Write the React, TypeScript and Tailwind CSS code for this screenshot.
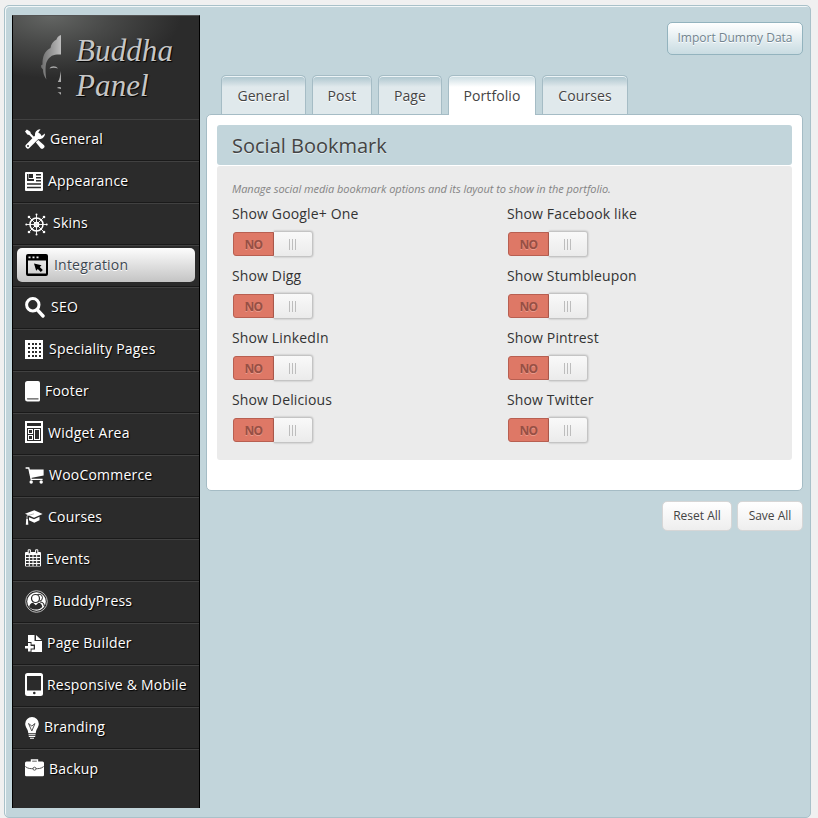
import React from "react";

type Item = {
  label: string;
  w: number;
  h: number;
  top: number;
  textX: number;
  icon: React.ReactNode;
};

const W = "#fff";
const D = "#2b2b2b";

const items: Item[] = [
  {
    label: "General", w: 20, h: 20, top: 10, textX: 50,
    icon: (
      <>
        <path d="M2.9 17.1 13.5 6.5" stroke={W} strokeWidth="4.8" strokeLinecap="round" />
        <path d="M15.5.2a5.3 5.3 0 0 0-5.3 6.8l2.8 2.9a5.4 5.4 0 0 0 7-5.4l-3.1 2.2-2.6-.7-.9-2.7z" fill={W} />
        <circle cx="3" cy="17" r="1" fill={D} />
        <path d="M0 2.4 1.9.5 5.3 2.7l.5 1.9 3.600 3.600-1.500 1.500-3.600-3.600-2-.6z" fill={W} />
        <path d="m10.800 13.200 2.400-2.300 5.600 5a2.300 2.300 0 0 1-3.200 3.300z" fill={W} />
      </>
    ),
  },
  {
    label: "Appearance", w: 18, h: 19, top: 11, textX: 48,
    icon: (
      <>
        <rect width="18" height="19" rx="1" fill={W} />
        <path d="M2 2h7v7H2zM11 2h5v1.5h-5zM11 5h5v1.5h-5zM11 8h5v1.5h-5zM2 11.3h14v1.4H2zM2 14.8h14v1.4H2z" fill={D} />
        <path d="M3.500 2h5.500v5H3.500z" fill={W} />
        <path d="M4 2h4v4H4z" fill={D} />
      </>
    ),
  },
  {
    label: "Skins", w: 23, h: 23, top: 10, textX: 53,
    icon: (
      <g stroke={W} fill="none">
        <circle cx="11.5" cy="11.5" r="6.5" strokeWidth="1.5" />
        <circle cx="11.5" cy="11.5" r="2.3" strokeWidth="1.1" />
        <path d="M11.5 1v21M1 11.5h21M4.2 4.2l14.6 14.6M18.8 4.2 4.2 18.8" strokeWidth=".9" />
        <g fill={W} stroke="none">
          <circle cx="11.5" cy="1.5" r="1" /><circle cx="11.5" cy="21.5" r="1" />
          <circle cx="1.3" cy="11.5" r="1" /><circle cx="21.7" cy="11.5" r="1" />
          <circle cx="4" cy="4" r="1.3" /><circle cx="19" cy="4" r="1.3" />
          <circle cx="4" cy="19" r="1.3" /><circle cx="19" cy="19" r="1.3" />
        </g>
      </g>
    ),
  },
  {
    label: "Integration", w: 24, h: 22, top: 9, textX: 54,
    icon: (
      <>
        <path fillRule="evenodd" d="M3 0h18a2 2 0 0 1 2 2v18a2 2 0 0 1-2 2H3a2 2 0 0 1-2-2V2a2 2 0 0 1 2-2zM3 6.500v13h18v-13z" fill="#000" />
        <path d="M3.500 2.600h2v1.700h-2zM7.500 2.600h2v1.700h-2zM11.500 2.600h2v1.700h-2z" fill="#eee" />
        <path d="m9 9.500 7.500 1.800-1.700 1.700 3 3-2 2-3-3-1.600 1.700z" fill="#000" />
      </>
    ),
  },
  {
    label: "SEO", w: 20, h: 21, top: 10, textX: 51,
    icon: (
      <>
        <circle cx="7.8" cy="7.8" r="6.2" fill="none" stroke={W} strokeWidth="3" />
        <path d="m12.4 12.8 5.600 6.200" stroke={W} strokeWidth="3.4" strokeLinecap="round" />
      </>
    ),
  },
  {
    label: "Speciality Pages", w: 18, h: 19, top: 11, textX: 49,
    icon: (
      <>
        <path d="M0 0h18v19H0z" fill={W} />
        {[3, 7, 11, 15].map((y) => (
          <path key={y} d={`M3 ${y}h2v2H3zM7 ${y}h2v2H7zM10 ${y}h2v2h-2zM14 ${y}h2v2h-2z`} fill={D} />
        ))}
      </>
    ),
  },
  {
    label: "Footer", w: 15, h: 21, top: 10, textX: 45,
    icon: (
      <>
        <path d="M2.5 0H13a2 2 0 0 1 2 2v17a1.5 1.5 0 0 1-1.5 1.5H2.4A2.4 2.4 0 0 1 0 18.2V2.5A2.5 2.5 0 0 1 2.5 0z" fill={W} />
        <path d="M2 17.2h11.5v1.3H2.2z" fill="#555" />
      </>
    ),
  },
  {
    label: "Widget Area", w: 18, h: 22, top: 8, textX: 48,
    icon: (
      <>
        <path d="M0 0h18v22H0z" fill={W} />
        <path d="M2 2h14v3H2zM2 7h14v13H2z" fill={D} />
        <path d="M3 8h5v5H3zM3 14h5v5H3zM9 8h6v11H9z" fill={W} />
        <path d="M4 9h3v3H4zM4 15h3v3H4zM10 9h4v9h-4z" fill={D} />
      </>
    ),
  },
  {
    label: "WooCommerce", w: 19, h: 17, top: 12, textX: 49,
    icon: (
      <>
        <path d="M.6 1h3.2l2.4 11.3h11.4" fill="none" stroke={W} strokeWidth="1.3" />
        <path d="M4 2.600h14.600v6L5.800 11z" fill={W} />
        <circle cx="6.2" cy="15" r="1.7" fill={W} />
        <circle cx="16.2" cy="15" r="1.7" fill={W} />
      </>
    ),
  },
  {
    label: "Courses", w: 18, h: 15, top: 13, textX: 48,
    icon: (
      <>
        <path d="m0 3.8 9.3-3.6L17.6 4 9 7.8z" fill={W} />
        <path d="M4 7.200 9 9.200l5.500-2.400v3.400L9.300 12.800 4 10.200z" fill={W} />
        <path d="M9 3.8 2 5.8v8" fill="none" stroke="#bbb" strokeWidth="1" />
        <path d="M1.3 9h1.6l.4 5.7H.8z" fill={W} />
      </>
    ),
  },
  {
    label: "Events", w: 16, h: 18, top: 10, textX: 46,
    icon: (
      <>
        <path d="M1 3h14a1 1 0 0 1 1 1v12.500a1 1 0 0 1-1 1H1a1 1 0 0 1-1-1V4a1 1 0 0 1 1-1z" fill={W} />
        <path d="M3.200.8h2.200v4H3.200zM10.600.8h2.200v4h-2.200z" fill={D} stroke={W} strokeWidth="1" />
        {[6, 9, 12, 15].map((y) => (
          <path key={y} d={`M1 ${y}h2.800v2H1zM4.800 ${y}h2.700v2H4.800zM8.500 ${y}h2.700v2H8.500zM12.200 ${y}H15v2h-2.800z`} fill="#3a3a3a" />
        ))}
      </>
    ),
  },
  {
    label: "BuddyPress", w: 23, h: 23, top: 9, textX: 53,
    icon: (
      <>
        <circle cx="11.5" cy="11.5" r="10.8" fill="none" stroke="#bbb" strokeWidth="1" />
        <circle cx="11.5" cy="11.5" r="9.300" fill={W} />
        <circle cx="14" cy="7.700" r="3.500" fill={W} stroke={D} strokeWidth="1" />
        <path d="M15 12c2.500 0 4 1.500 4.300 4" fill="none" stroke={D} strokeWidth="1.200" />
        <circle cx="10.500" cy="8.500" r="4" fill={W} stroke={D} strokeWidth="1.200" />
        <path d="M4.200 17c.2-2.700 2-4 3.900-4.200l2.700 2.400 2.700-2.400c2 .2 3.600 1.500 3.800 4.200-3 3.300-9.500 3.600-13.100 0z" fill={D} />
      </>
    ),
  },
  {
    label: "Page Builder", w: 17, h: 17, top: 12, textX: 47,
    icon: (
      <>
        <path d="M3 0h6.500v6H17v11H6.500v-2.500H10v-5H6.500V7H3z" fill={W} />
        <path d="M11 0v5h5.500z" fill={W} />
        <path d="M4.300 8v8.500M0 12.300h8.700" stroke={W} strokeWidth="2.600" />
      </>
    ),
  },
  {
    label: "Responsive & Mobile", w: 18, h: 24, top: 8, textX: 47,
    icon: (
      <>
        <rect width="18" height="23" rx="2.5" fill={W} />
        <path d="M2 3h14v14.500H2z" fill={D} />
        <circle cx="9.300" cy="20" r="1.300" fill={D} />
      </>
    ),
  },
  {
    label: "Branding", w: 14, h: 22, top: 10, textX: 44,
    icon: (
      <>
        <path d="M7 0a6.800 6.800 0 0 1 6.800 6.800c0 3.600-2.700 5-3 9.400H3.300C3 11.800.2 10.400.2 6.800A6.800 6.800 0 0 1 7 0z" fill={W} />
        <path d="m3.500 6.500 3.300 7.500L10 6.500 6.800 9z" fill="none" stroke="#555" strokeWidth="1" />
        <path d="M3.500 17.700h7M3.800 19.500h6.400M5 21.300h4" stroke={W} strokeWidth="1.100" />
      </>
    ),
  },
  {
    label: "Backup", w: 19, h: 18, top: 10, textX: 49,
    icon: (
      <>
        <path d="M6.500 3V1h6v2" fill="none" stroke={W} strokeWidth="1.400" />
        <path d="M1.500 2.500h16A1.500 1.500 0 0 1 19 4v12a1.300 1.300 0 0 1-1.300 1.300H1.300A1.300 1.300 0 0 1 0 16V4a1.500 1.500 0 0 1 1.500-1.500z" fill={W} />
        <path d="M.3 7.500c2.500 2.200 5 2.200 9.200 2.200s6.700 0 9.200-2.200" fill="none" stroke="#555" strokeWidth="1" />
        <circle cx="9.500" cy="9.700" r="1.500" fill={W} stroke="#555" strokeWidth="1" />
      </>
    ),
  },
];

function Logo() {
  return (
    <div className="flex h-[103px] shrink-0 bg-[radial-gradient(ellipse_130px_62px_at_38px_0px,#636563_0%,#484948_45%,#2b2b2b_100%)]">
      <svg className="ml-7 mt-[19px] shrink-0" width="20" height="61" viewBox="0 0 20 61">
        <defs>
          <linearGradient id="face" x1="0" x2="1" y1="0" y2="0">
            <stop offset="0" stopColor="#6d6d6d" />
            <stop offset="1" stopColor="#bdbdbd" />
          </linearGradient>
        </defs>
        <path d="M20 0v19.500h-4c-5 0-9 3.500-10.800 8.500-1 4-.8 11 .2 16.500C2.800 41 2 37 2 34.500L.3 32.500 0 30.500l1.500-1C1.300 22 3.500 16 9.500 13c.5-4 2.500-6.500 6-8.500C16 2.500 17.500.8 20 0z" fill="url(#face)" />
        <path d="M8.500 33.500c1.500-2.800 6.500-3 8.500 0-3-1-5.500-1-8.500 0zM20 36v11h-3.200c2-2.500 2.200-6.500 3.200-11zM16 53c1-1.200 2.500-1 4-.5V54zM16.500 57.200H20V60c-1-1.500-2-2-3.500-2.800z" fill="#aaa" />
      </svg>
      <div className="ml-[15px] mt-[17px] font-['Liberation_Serif'] text-[31px] italic leading-[35px] tracking-[0.1px] text-[#c6c6c6] [text-shadow:1px_1px_1px_#000]">
        <div>Buddha</div>
        <div>Panel</div>
      </div>
    </div>
  );
}

function Sidebar() {
  return (
    <nav className="ml-[7px] mt-[8px] flex h-[793px] w-[188px] shrink-0 flex-col border-x border-t border-black border-t-[#555] bg-[#2b2b2b]">
      <Logo />
      {items.map((it, i) => {
        const active = it.label === "Integration";
        return (
          <div
            key={it.label}
            className={
              "h-[42px] shrink-0 border-t border-t-[#414141] px-1 pt-[2px] " +
              (i < items.length - 1 ? "border-b border-b-[#1a1a1a]" : "")
            }
          >
            <div
              className={
                "flex h-[34px] items-start rounded-[5px] pl-2 " +
                (active ? "bg-gradient-to-b from-[#fdfdfd] to-[#c4c4c4]" : "")
              }
            >
              <svg
                className="block shrink-0"
                width={it.w}
                height={it.h}
                viewBox={`0 0 ${it.w} ${it.h}`}
                fill="none"
                style={{ marginTop: it.top - 3 }}
              >
                {it.icon}
              </svg>
              <span
                className={
                  "mt-[7px] whitespace-nowrap text-[14px] leading-[20px] tracking-[0.21px] " +
                  (active
                    ? "text-[#3c4650] [text-shadow:0_1px_0_#fff]"
                    : "text-white [text-shadow:1px_1px_1px_#000]")
                }
                style={{ marginLeft: it.textX - 25 - it.w }}
              >
                {it.label}
              </span>
            </div>
          </div>
        );
      })}
    </nav>
  );
}

const tabs = [
  { label: "General", cls: "w-[85px]" },
  { label: "Post", cls: "w-[60px]" },
  { label: "Page", cls: "w-[64px]" },
  { label: "Portfolio", cls: "w-[88px]" },
  { label: "Courses", cls: "w-[86px]" },
];

function Tabs() {
  return (
    <div className="relative z-10 ml-[15px] mt-5 flex h-[40px] gap-[6px]">
      {tabs.map((t) => {
        const active = t.label === "Portfolio";
        return (
          <div
            key={t.label}
            className={
              "rounded-t-[5px] border border-b-0 border-[#a5bcc5] pt-[10px] text-center text-[14px] leading-[20px] tracking-[0.1px] text-[#444] shadow-[inset_0_1px_0_#edf4f6] [text-shadow:0_1px_0_#fff] " +
              t.cls +
              (active
                ? " h-[40px] bg-[linear-gradient(#c9dbe1_0px,#fff_11px)]"
                : " h-[39px] bg-[linear-gradient(#abc4cd_0px,#e0e9ec_11px)]")
            }
          >
            {t.label}
          </div>
        );
      })}
    </div>
  );
}

function Toggle() {
  return (
    <div className="ml-px mt-[7px] flex h-[26px] items-center">
      <div className="flex h-[24px] w-[41px] items-center justify-center rounded-l-[3px] border border-[#b85f51] bg-[#de7866] pt-px font-['Open_Sans'] text-[12px] font-bold tracking-[-0.7px] text-[#964f44] [text-shadow:0_1px_0_#e9998b]">
        NO
      </div>
      <div className="flex h-[26px] w-[39px] items-center justify-center gap-[2px] rounded-r-[3px] border border-l-0 border-[#c4c4c4] bg-gradient-to-b from-[#f9f9f9] to-[#ebebeb] pr-px shadow-[0_0_2px_rgba(0,0,0,0.3)]">
        <i className="h-[11px] w-px bg-[#bdbdbd]" />
        <i className="h-[11px] w-px bg-[#bdbdbd]" />
        <i className="h-[11px] w-px bg-[#bdbdbd]" />
      </div>
    </div>
  );
}

const options = [
  "Show Google+ One", "Show Facebook like",
  "Show Digg", "Show Stumbleupon",
  "Show LinkedIn", "Show Pintrest",
  "Show Delicious", "Show Twitter",
];

export default function App() {
  return (
    <div className="h-[818px] w-[818px] overflow-hidden bg-[#f0f0f0] pl-1 pt-[5px] font-['Open_Sans',sans-serif]">
      <div className="flex h-[813px] w-[807px] rounded-[5px] border border-[#a9c1c9] bg-[#c2d5db] pt-px shadow-[inset_1px_1px_0_#f2f7f8]">
        <Sidebar />
        <main className="ml-[6px] w-[597px] pt-[15px]">
          <div className="flex justify-end">
            <button className="h-[33px] w-[136px] rounded-[5px] border border-[#93b3be] bg-gradient-to-b from-white to-[#c9dce2] pb-[2px] text-[12px] text-[#72848f] [text-shadow:0_1px_0_#fff]">
              Import Dummy Data
            </button>
          </div>
          <Tabs />
          <section className="-mt-px h-[377px] rounded-[5px] border border-[#a5bcc5] bg-white p-[10px]">
            <h2 className="h-[40px] w-[575px] rounded-[3px] bg-[#c2d5db] pl-[15px] text-[20px] leading-[41px] text-[#444] [text-shadow:0_1px_0_#dfeaed]">
              Social Bookmark
            </h2>
            <div className="mt-px h-[294px] w-[575px] rounded-[3px] bg-[#ebebeb] pl-[15px] pt-[15px]">
              <p className="text-[11px] italic leading-4 tracking-[-0.04px] text-[#848484]">
                Manage social media bookmark options and its layout to show in the portfolio.
              </p>
              <div className="mt-[7px] grid grid-cols-[275px_275px]">
                {options.map((o) => (
                  <div key={o} className="h-[62px]">
                    <div className="text-[14px] leading-[20px] tracking-[0.14px] text-[#333]">{o}</div>
                    <Toggle />
                  </div>
                ))}
              </div>
            </div>
          </section>
          <div className="mt-[10px] flex justify-end gap-[5px] text-[12px] text-[#444]">
            <button className="h-[30px] w-[70px] rounded-[5px] border border-[#d6d6d6] bg-gradient-to-b from-white to-[#eeeeee] pb-px">Reset All</button>
            <button className="h-[30px] w-[66px] rounded-[5px] border border-[#d6d6d6] bg-gradient-to-b from-white to-[#eeeeee] pb-px">Save All</button>
          </div>
        </main>
      </div>
    </div>
  );
}
